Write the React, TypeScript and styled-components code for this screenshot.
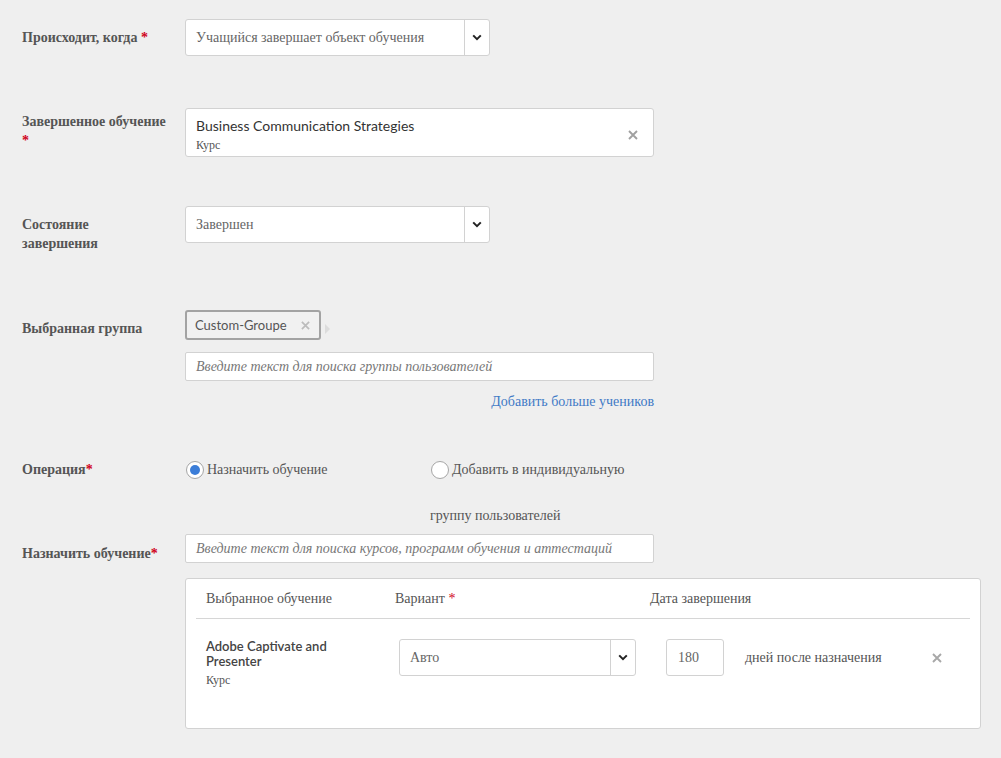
import React from "react";
import styled, { createGlobalStyle } from "styled-components";

const GlobalStyle = createGlobalStyle`
  html, body {
    margin: 0;
    padding: 0;
    background: #efefef;
  }
  body {
    font-family: "Liberation Serif", "Times New Roman", serif;
    color: #555;
  }
`;

const Page = styled.div`
  width: 1001px;
  height: 758px;
  box-sizing: border-box;
  padding: 19px 20px 0 22px;
  overflow: hidden;
`;

const Row = styled.div<{ $h: number }>`
  display: grid;
  grid-template-columns: 163px 1fr;
  align-items: start;
  height: ${(p) => p.$h}px;
`;

const Label = styled.div<{ $pad: number }>`
  padding-top: ${(p) => p.$pad}px;
  font-size: 14px;
  font-weight: bold;
  line-height: 19px;
  color: #555;
`;

const Star = styled.span`
  color: #d0021b;
  font-weight: bold;
`;

const Field = styled.div`
  display: flex;
  flex-direction: column;
  align-items: flex-start;
`;

const SelectBox = styled.div<{ $w: number }>`
  display: flex;
  align-items: stretch;
  width: ${(p) => p.$w}px;
  height: 37px;
  box-sizing: border-box;
  background: #fff;
  border: 1px solid #d2d2d2;
  border-radius: 3px;
`;

const SelectValue = styled.div`
  flex: 1;
  display: flex;
  align-items: center;
  padding-left: 10px;
  font-size: 14px;
  color: #666;
`;

const SelectArrow = styled.div`
  width: 24px;
  border-left: 1px solid #d2d2d2;
  display: flex;
  align-items: center;
  justify-content: center;
`;

const Chevron = () => (
  <svg width="10" height="7" viewBox="0 0 10 7">
    <path d="M1.2 1.4 L5 5.2 L8.8 1.4" fill="none" stroke="#222" strokeWidth="2" />
  </svg>
);

const Cross = ({ color, size }: { color: string; size: number }) => (
  <svg width={size} height={size} viewBox="0 0 10 10">
    <path d="M1 1 L9 9 M9 1 L1 9" stroke={color} strokeWidth="1.9" />
  </svg>
);

const Select = ({ value, width }: { value: string; width: number }) => (
  <SelectBox $w={width}>
    <SelectValue>{value}</SelectValue>
    <SelectArrow>
      <Chevron />
    </SelectArrow>
  </SelectBox>
);

const PickedBox = styled.div`
  display: flex;
  justify-content: space-between;
  width: 469px;
  height: 49px;
  box-sizing: border-box;
  padding: 8px 15px 0 10px;
  background: #fff;
  border: 1px solid #d2d2d2;
  border-radius: 3px;
`;

const PickedTitle = styled.div`
  font-family: Lato, "Open Sans", sans-serif;
  font-size: 14px;
  line-height: 18px;
  color: #333;
`;

const SubType = styled.div`
  font-size: 12px;
  line-height: 16px;
  margin-top: 2px;
  color: #555;
`;

const CloseSpot = styled.div`
  padding-top: 9px;
`;

const TagLine = styled.div`
  display: flex;
  align-items: center;
  gap: 4px;
`;

const Tag = styled.div`
  display: flex;
  align-items: center;
  justify-content: space-between;
  width: 136px;
  height: 30px;
  box-sizing: border-box;
  padding: 0 9px 0 8px;
  border: 2px solid #a3a3a3;
  border-radius: 3px;
  background: #f1f1f1;
  font-family: Lato, "Open Sans", sans-serif;
  font-size: 13px;
  color: #555;
`;

const TagArrow = styled.div`
  margin-top: 8px;
  width: 0;
  height: 0;
  border-top: 5px solid transparent;
  border-bottom: 5px solid transparent;
  border-left: 5px solid #dcdcdc;
`;

const TextInput = styled.div<{ $w: number; $top?: number }>`
  width: ${(p) => p.$w}px;
  height: 29px;
  margin-top: ${(p) => p.$top ?? 0}px;
  box-sizing: border-box;
  display: flex;
  align-items: center;
  padding-left: 10px;
  background: #fff;
  border: 1px solid #d2d2d2;
  border-radius: 2px;
  font-size: 14px;
  font-style: italic;
  color: #777;
`;

const LinkLine = styled.div`
  width: 469px;
  text-align: right;
  margin-top: 12px;
  font-size: 14px;
  line-height: 17px;
  color: #3f7ac6;
`;

const Options = styled.div`
  display: flex;
  padding-left: 1px;
`;

const Option = styled.div<{ $w?: number }>`
  width: ${(p) => (p.$w ? `${p.$w}px` : "auto")};
  display: flex;
  flex-direction: column;
`;

const OptionLine = styled.div`
  display: flex;
  align-items: center;
  gap: 3px;
  font-size: 14px;
  line-height: 19px;
  color: #555;
`;

const Radio = styled.span<{ $on?: boolean }>`
  width: 18px;
  height: 18px;
  box-sizing: border-box;
  border-radius: 50%;
  border: 1px solid #a6a6a6;
  background: #fff;
  display: flex;
  align-items: center;
  justify-content: center;
  &::after {
    content: "";
    width: 10px;
    height: 10px;
    border-radius: 50%;
    background: ${(p) => (p.$on ? "#3b7dd8" : "transparent")};
  }
`;

const OptionWrap = styled.div`
  margin-top: 27px;
  margin-left: -1px;
  font-size: 14px;
  line-height: 19px;
  color: #555;
`;

const Table = styled.div`
  margin-top: 15px;
  width: 796px;
  height: 151px;
  box-sizing: border-box;
  background: #fff;
  border: 1px solid #d2d2d2;
  border-radius: 3px;
  padding: 0 10px;
`;

const HeadRow = styled.div`
  display: flex;
  align-items: center;
  height: 39px;
  padding-left: 10px;
  border-bottom: 1px solid #d6d6d6;
  font-size: 14px;
  color: #555;
`;

const Cell = styled.div<{ $w: number }>`
  width: ${(p) => p.$w}px;
  flex-shrink: 0;
`;

const BodyRow = styled.div`
  display: flex;
  align-items: flex-start;
  padding: 20px 0 0 10px;
`;

const CourseName = styled.div`
  font-family: Lato, "Open Sans", sans-serif;
  font-size: 13px;
  font-weight: 600;
  line-height: 15px;
  color: #444;
`;

const DaysInput = styled.div`
  width: 58px;
  height: 37px;
  box-sizing: border-box;
  margin-left: 20px;
  padding-left: 11px;
  display: flex;
  align-items: center;
  border: 1px solid #d2d2d2;
  border-radius: 3px;
  font-size: 14px;
  color: #666;
`;

const DaysText = styled.div`
  margin-left: 21px;
  height: 37px;
  display: flex;
  align-items: center;
  font-size: 14px;
  color: #555;
  width: 187px;
`;

const RowClose = styled.div`
  height: 37px;
  display: flex;
  align-items: center;
`;

export default function App() {
  return (
    <>
      <GlobalStyle />
      <Page>
        <Row $h={89}>
          <Label $pad={9}>
            Происходит, когда <Star>*</Star>
          </Label>
          <Field>
            <Select value="Учащийся завершает объект обучения" width={305} />
          </Field>
        </Row>

        <Row $h={98}>
          <Label $pad={4}>
            Завершенное обучение
            <br />
            <Star>*</Star>
          </Label>
          <Field>
            <PickedBox>
              <div>
                <PickedTitle>Business Communication Strategies</PickedTitle>
                <SubType>Курс</SubType>
              </div>
              <CloseSpot>
                <Cross color="#a0a0a0" size={10} />
              </CloseSpot>
            </PickedBox>
          </Field>
        </Row>

        <Row $h={104}>
          <Label $pad={9}>
            Состояние
            <br />
            завершения
          </Label>
          <Field>
            <Select value="Завершен" width={305} />
          </Field>
        </Row>

        <Row $h={150}>
          <Label $pad={9}>Выбранная группа</Label>
          <Field>
            <TagLine>
              <Tag>
                Custom-Groupe
                <Cross color="#bcbcbc" size={9} />
              </Tag>
              <TagArrow />
            </TagLine>
            <TextInput $w={469} $top={12}>
              Введите текст для поиска группы пользователей
            </TextInput>
            <LinkLine>Добавить больше учеников</LinkLine>
          </Field>
        </Row>

        <Row $h={74}>
          <Label $pad={0}>
            Операция<Star>*</Star>
          </Label>
          <Field>
            <Options>
              <Option $w={245}>
                <OptionLine>
                  <Radio $on />
                  Назначить обучение
                </OptionLine>
              </Option>
              <Option>
                <OptionLine>
                  <Radio />
                  Добавить в индивидуальную
                </OptionLine>
                <OptionWrap>группу пользователей</OptionWrap>
              </Option>
            </Options>
          </Field>
        </Row>

        <Row $h={220}>
          <Label $pad={10}>
            Назначить обучение<Star>*</Star>
          </Label>
          <Field>
            <TextInput $w={469}>
              Введите текст для поиска курсов, программ обучения и аттестаций
            </TextInput>
            <Table>
              <HeadRow>
                <Cell $w={189}>Выбранное обучение</Cell>
                <Cell $w={255}>
                  Вариант <Star style={{ fontWeight: "normal" }}>*</Star>
                </Cell>
                <Cell $w={200}>Дата завершения</Cell>
              </HeadRow>
              <BodyRow>
                <Cell $w={193}>
                  <CourseName>
                    Adobe Captivate and
                    <br />
                    Presenter
                  </CourseName>
                  <SubType style={{ marginTop: 3 }}>Курс</SubType>
                </Cell>
                <Select value="Авто" width={237} />
                <Cell $w={10} />
                <DaysInput>180</DaysInput>
                <DaysText>дней после назначения</DaysText>
                <RowClose>
                  <Cross color="#a8a8a8" size={10} />
                </RowClose>
              </BodyRow>
            </Table>
          </Field>
        </Row>
      </Page>
    </>
  );
}
